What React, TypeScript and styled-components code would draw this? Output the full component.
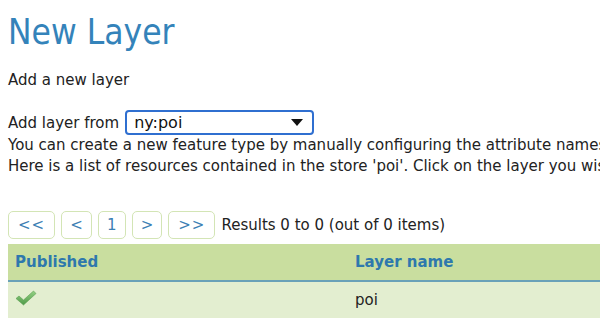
import styled, { createGlobalStyle } from "styled-components";

const GlobalStyle = createGlobalStyle`
    body {
        margin: 0;
        background: #ffffff;
        font-family: "DejaVu Sans", Verdana, sans-serif;
        font-size: 15px;
        color: #222222;
        overflow: hidden;
    }
`;

const columns = ["Published", "Layer name"];

const rows = [{ published: true, name: "poi" }];

const pages = ["<<", "<", "1", ">", ">>"];

const App = () => {
    return (
        <Page>
            <GlobalStyle />
            <Title>New Layer</Title>
            <Intro>Add a new layer</Intro>

            <FromRow>
                Add layer from
                <Select>
                    <span>ny:poi</span>
                    <Arrow />
                </Select>
            </FromRow>
            <Line>You can create a new feature type by manually configuring the attribute names and types.</Line>
            <Line>Here is a list of resources contained in the store 'poi'. Click on the layer you wish to configure</Line>

            <Pager>
                {pages.map((p) => (
                    <PageButton key={p} wide={p.length > 1}>{p}</PageButton>
                ))}
                <Results>Results 0 to 0 (out of 0 items)</Results>
            </Pager>

            <Table>
                <thead>
                    <tr>
                        {columns.map((c) => (
                            <Th key={c}>{c}</Th>
                        ))}
                    </tr>
                </thead>
                <tbody>
                    {rows.map((r) => (
                        <tr key={r.name}>
                            <Td>{r.published && <Check />}</Td>
                            <Td>{r.name}</Td>
                        </tr>
                    ))}
                </tbody>
            </Table>
        </Page>
    );
};

const Check = () => (
    <svg width="22" height="16" viewBox="0 0 22 16" style={{ display: "block", marginTop: -4 }}>
        <defs>
            <linearGradient id="chk" x1="0" y1="0" x2="0" y2="1">
                <stop offset="0" stopColor="#94d184" />
                <stop offset="1" stopColor="#4f9a48" />
            </linearGradient>
        </defs>
        <path
            d="M1 8.5 L4 6 L8.5 10 L18.5 1 L21 3.5 L8.5 15 Z"
            fill="url(#chk)"
            stroke="#5a9f52"
            strokeWidth="0.6"
            strokeLinejoin="round"
        />
    </svg>
);

const Page = styled.div`
    width: 980px;
    padding: 0 8px;
`;

const Title = styled.h1`
    margin: 0;
    padding-top: 10px;
    font-family: "DejaVu Sans Condensed", "DejaVu Sans", Verdana, sans-serif;
    font-weight: normal;
    font-size: 35px;
    line-height: 44px;
    color: #3483ba;
`;

const Intro = styled.p`
    margin: 16px 0 0;
    line-height: 21px;
`;

const FromRow = styled.div`
    display: flex;
    align-items: center;
    gap: 6px;
    margin-top: 19px;
    height: 25px;
    white-space: nowrap;
`;

const Select = styled.div`
    box-sizing: border-box;
    display: flex;
    align-items: center;
    justify-content: space-between;
    width: 189px;
    height: 25px;
    padding: 0 9px 0 7px;
    border: 2px solid #2f6fd0;
    border-radius: 4px;
    font-size: 16px;
    color: #111111;
`;

const Arrow = styled.span`
    width: 0;
    height: 0;
    border-left: 6px solid transparent;
    border-right: 6px solid transparent;
    border-top: 7px solid #111111;
`;

const Line = styled.div`
    white-space: nowrap;
    line-height: 21px;

    &:first-of-type {
        margin-top: 2px;
    }
`;

const Pager = styled.div`
    display: flex;
    align-items: center;
    gap: 6px;
    margin-top: 34px;
`;

const PageButton = styled.button<{ wide: boolean }>`
    box-sizing: border-box;
    height: 28px;
    min-width: 28px;
    padding: ${(p) => (p.wide ? "0 9px" : "0 8px")};
    background: #ffffff;
    border: 1px solid #d3e5b5;
    border-radius: 5px;
    font-family: "DejaVu Sans", Verdana, sans-serif;
    font-size: 15px;
    letter-spacing: ${(p) => (p.wide ? "1px" : "0")};
    color: #3c80b4;
`;

const Results = styled.span`
    white-space: nowrap;
`;

const Table = styled.table`
    width: 680px;
    margin-top: 5px;
    border-collapse: collapse;
    table-layout: fixed;
`;

const Th = styled.th`
    height: 36px;
    padding: 0 7px;
    text-align: left;
    background: #c9de9f;
    border-bottom: 2px solid #6aa1b8;
    color: #2e78ad;
`;

const Td = styled.td`
    height: 36px;
    padding: 0 7px;
    background: #e3eed0;
    vertical-align: middle;
`;

export default App;
